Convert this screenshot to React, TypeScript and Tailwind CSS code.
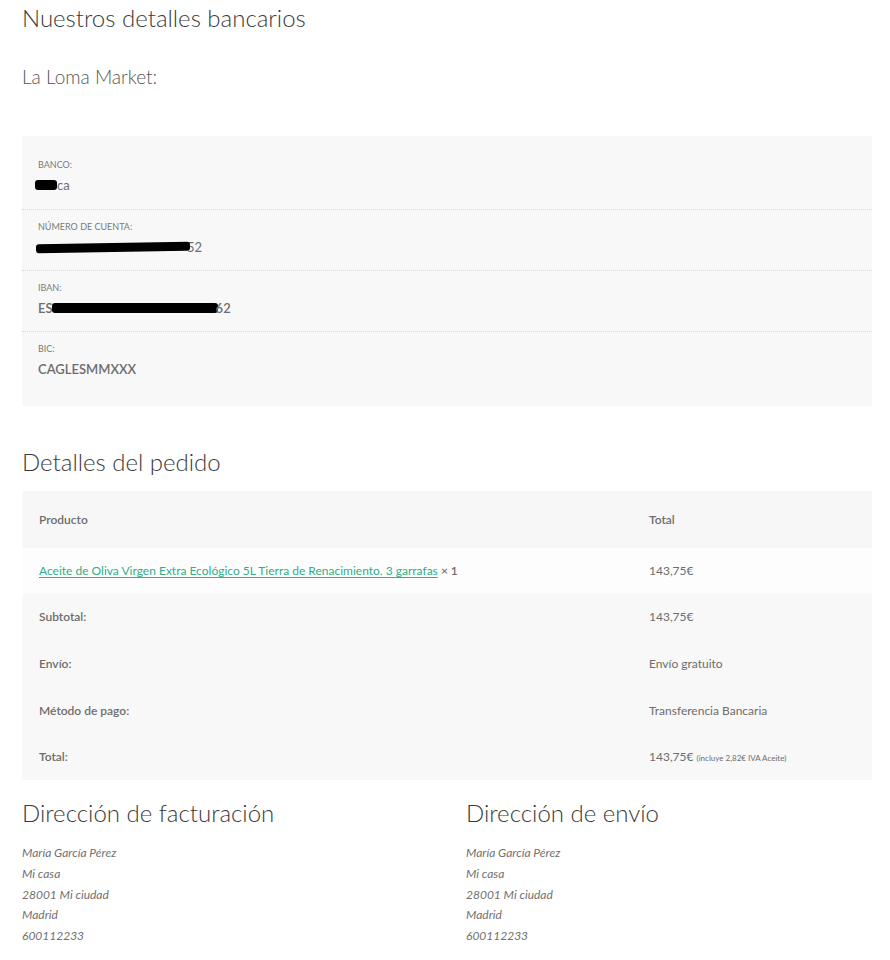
import React from "react";

const Bar = ({ w, className = "" }: { w: string; className?: string }) => (
  <span className={`inline-block bg-black rounded-[3px] align-middle ${w} ${className}`} />
);

function BankRow({ label, children, first }: { label: string; children: React.ReactNode; first?: boolean }) {
  return (
    <div className={`px-4 pt-[10px] ${first ? "pb-[14px]" : "pb-[13px] border-t border-dotted border-[#dcdcdc]"}`}>
      <div className="text-[9px] leading-[14px] uppercase text-[#7a7a7a]">{label}</div>
      <div className="mt-[3px] text-[13px] leading-[20px] font-semibold text-[#6d6d6d] flex items-center">{children}</div>
    </div>
  );
}

function Row({ h, bg, label, value, bold = true }: { h: string; bg: string; label: React.ReactNode; value: React.ReactNode; bold?: boolean }) {
  return (
    <div className={`grid grid-cols-[610px_1fr] px-[17px] items-center ${h} ${bg}`}>
      <div className={`text-[12px] ${bold ? "font-semibold" : ""} text-[#6d6d6d]`}>{label}</div>
      <div className="text-[12px] text-[#6d6d6d]">{value}</div>
    </div>
  );
}

function Address({ title }: { title: string }) {
  return (
    <div>
      <h2 className="text-[24px] leading-[36px] font-light text-[#3a3a3a]">{title}</h2>
      <div className="mt-[12px] italic text-[12px] leading-[20.8px] text-[#707070]">
        <div>María García Pérez</div>
        <div>Mi casa</div>
        <div>28001 Mi ciudad</div>
        <div>Madrid</div>
        <div>600112233</div>
      </div>
    </div>
  );
}

export default function App() {
  return (
    <div className="w-[890px] h-[960px] overflow-hidden bg-white px-[22px] pr-[18px] font-['Lato',sans-serif] text-[#6d6d6d]">
      <h2 className="text-[24px] leading-[36px] font-light text-[#3a3a3a]">Nuestros detalles bancarios</h2>
      <h3 className="mt-[27px] text-[19px] leading-[28px] font-light text-[#555555]">La Loma Market:</h3>

      <div className="mt-[45px] bg-[#f8f8f8] pt-[12px] pb-[14px]">
        <BankRow label="Banco:" first>
          <Bar w="w-[22px] h-[10px]" className="ml-[-3px]" />
          <span className="font-normal">ca</span>
        </BankRow>
        <BankRow label="Número de cuenta:">
          <Bar w="w-[154px] h-[9px]" className="ml-[-2px] -mr-[3px] rotate-[-1deg]" />
          <span className="font-normal">52</span>
        </BankRow>
        <BankRow label="IBAN:">
          <span>ES</span>
          <Bar w="w-[166px] h-[10px]" className="-ml-[1px] -mr-[2px]" />
          <span>62</span>
        </BankRow>
        <BankRow label="BIC:">
          <span>CAGLESMMXXX</span>
        </BankRow>
      </div>

      <h2 className="mt-[38px] text-[24px] leading-[36px] font-light text-[#3a3a3a]">Detalles del pedido</h2>

      <div className="mt-[11px]">
        <Row h="h-[57px]" bg="bg-[#f7f7f7]" label="Producto" value={<span className="font-semibold">Total</span>} />
        <Row
          h="h-[46px]"
          bg="bg-[#fdfdfd]"
          bold={false}
          label={
            <span>
              <a href="#" className="text-[#2fae88] underline underline-offset-2">
                Aceite de Oliva Virgen Extra Ecológico 5L Tierra de Renacimiento. 3 garrafas
              </a>{" "}
              <span className="font-semibold">× 1</span>
            </span>
          }
          value="143,75€"
        />
        <Row h="h-[46px]" bg="bg-[#f8f8f8]" label="Subtotal:" value="143,75€" />
        <Row h="h-[47px]" bg="bg-[#f8f8f8]" label="Envío:" value="Envío gratuito" />
        <Row h="h-[47px]" bg="bg-[#f8f8f8]" label="Método de pago:" value="Transferencia Bancaria" />
        <Row
          h="h-[46px]"
          bg="bg-[#f8f8f8]"
          label="Total:"
          value={
            <span>
              143,75€ <span className="text-[8px]">(incluye 2,82€ IVA Aceite)</span>
            </span>
          }
        />
      </div>

      <div className="mt-[15px] grid grid-cols-[444px_1fr]">
        <Address title="Dirección de facturación" />
        <Address title="Dirección de envío" />
      </div>
    </div>
  );
}
